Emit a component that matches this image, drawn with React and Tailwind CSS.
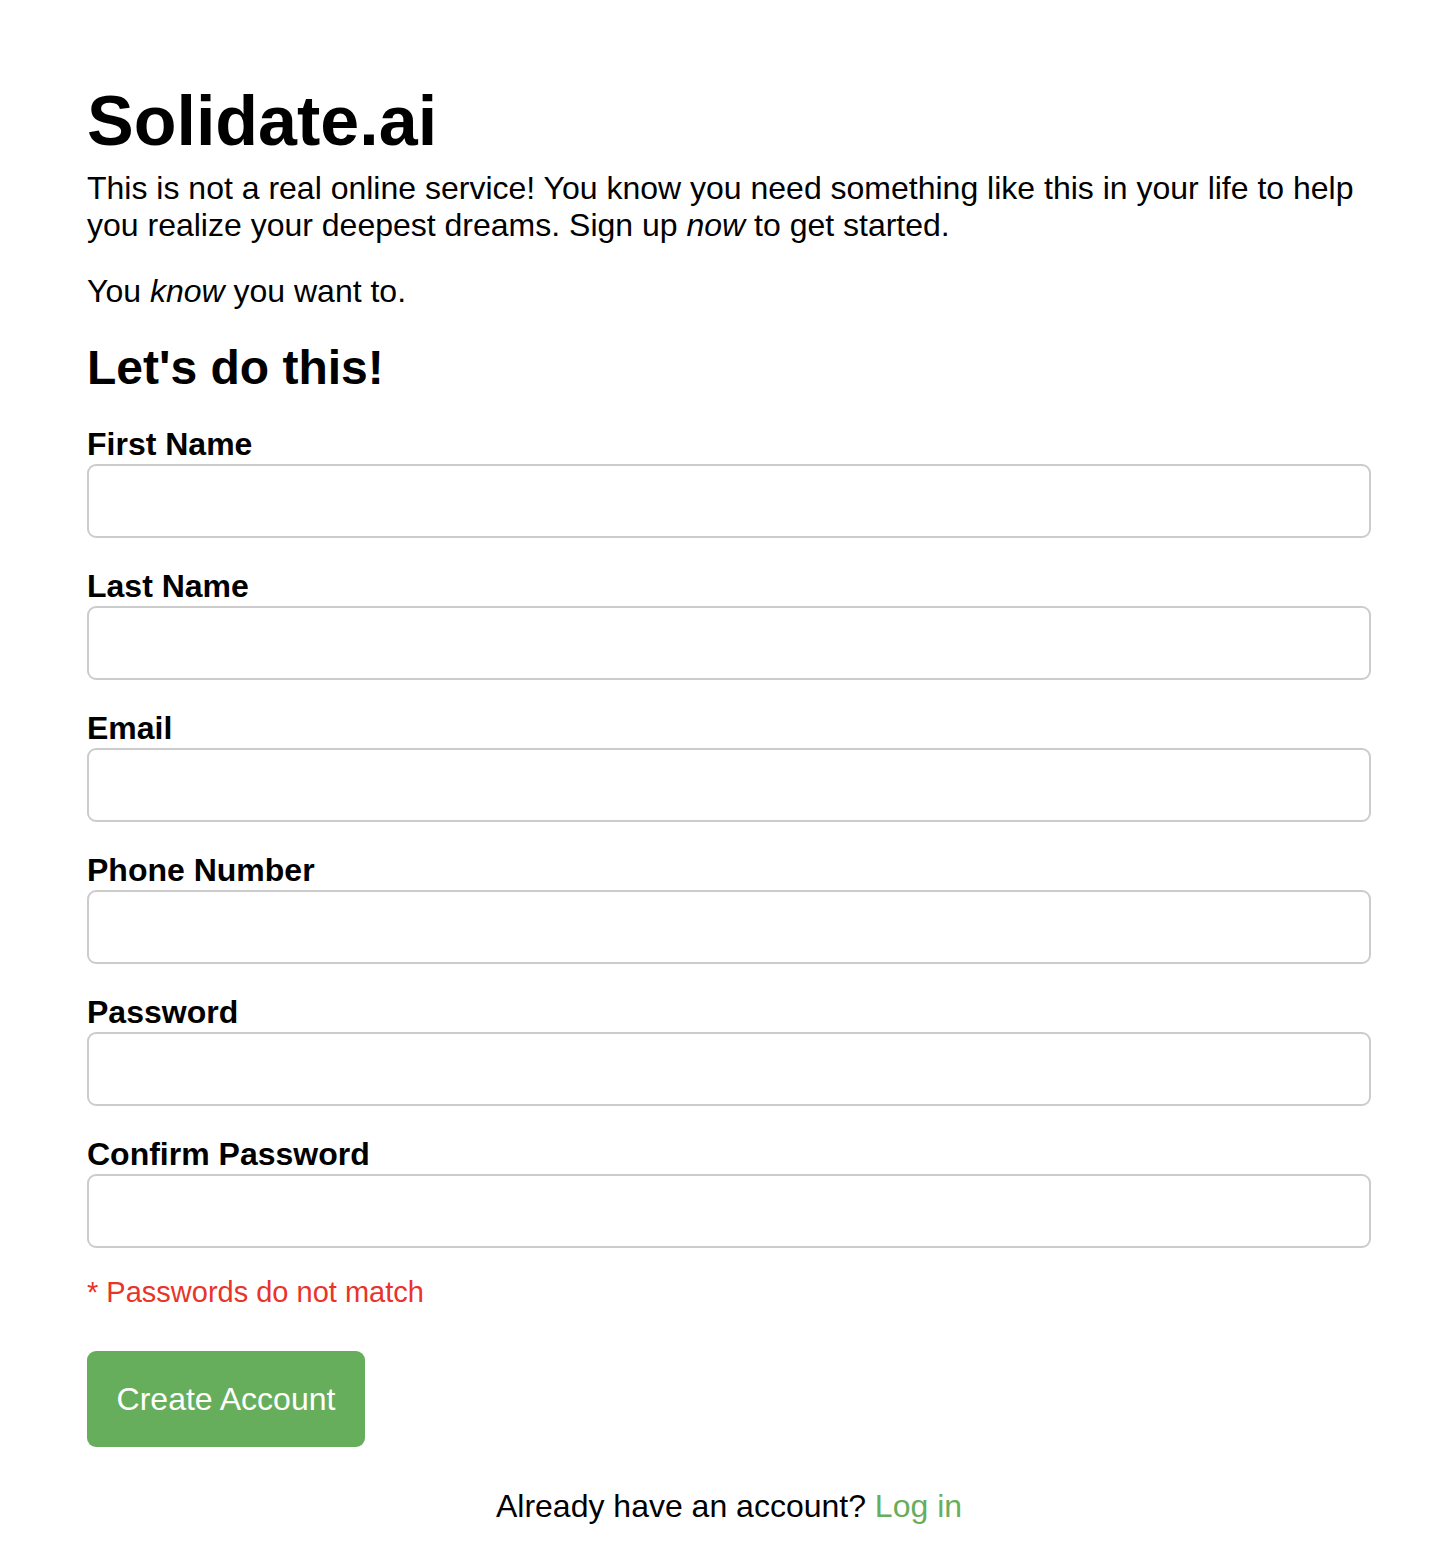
import React from 'react'

const fields = ['First Name', 'Last Name', 'Email', 'Phone Number', 'Password', 'Confirm Password']

function Field({ label, first }) {
  return (
    <div className={first ? '' : 'mt-[30px]'}>
      <label className="block text-[32px] leading-[36px] font-bold">{label}</label>
      <input
        type={label.includes('Password') ? 'password' : 'text'}
        className="mt-[2px] block h-[74px] w-full rounded-[9px] border-2 border-[#cccccc] bg-white px-4 text-[32px] outline-none"
      />
    </div>
  )
}

export default function App() {
  return (
    <div className="min-h-[1568px] bg-white text-black" style={{ fontFamily: '"Liberation Sans", Arial, sans-serif' }}>
      <div className="pl-[87px] pr-[85px] pt-[86px] pb-10">
        <h1 className="text-[70px] leading-[70px] font-bold">Solidate.ai</h1>
        <p className="mt-[14px] text-[32px] leading-[37px]">
          This is not a real online service! You know you need something like this in your life to help you realize
          your deepest dreams. Sign up <em>now</em> to get started.
        </p>
        <p className="mt-[29px] text-[32px] leading-[37px]">
          You <em>know</em> you want to.
        </p>
        <h2 className="mt-[34px] text-[48px] leading-[48px] font-bold">Let's do this!</h2>
        <form className="mt-[34px]">
          {fields.map((f, i) => (
            <Field key={f} label={f} first={i === 0} />
          ))}
          <p className="mt-[26px] text-[29px] leading-[36px] text-[#e8342a]">* Passwords do not match</p>
          <button
            type="button"
            className="mt-[41px] flex h-[96px] w-[278px] items-center justify-center rounded-[9px] bg-[#67ae5c] text-[32px] text-white"
          >
            Create Account
          </button>
          <p className="mt-[41px] text-center text-[32px] leading-[36px]">
            Already have an account? <a href="#" className="text-[#67ae5c]">Log in</a>
          </p>
        </form>
      </div>
    </div>
  )
}
